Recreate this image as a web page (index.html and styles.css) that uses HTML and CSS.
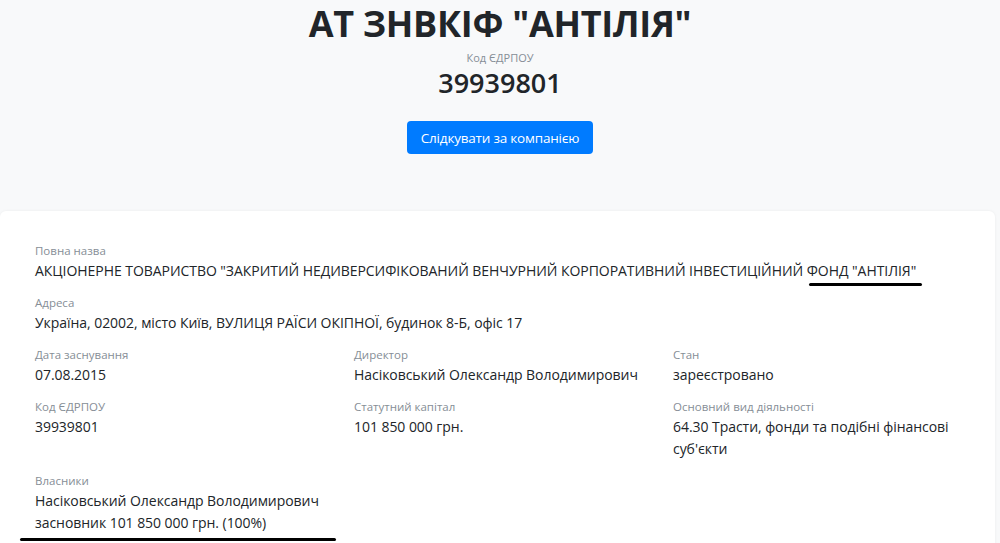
FILE: index.html
```html
<!doctype html>
<html lang="uk">
  <head>
    <meta charset="utf-8">
    <title>АТ ЗНВКІФ "АНТІЛІЯ"</title>
    <link rel="stylesheet" href="styles.css">
  </head>
  <body>
    <div class="hero">
      <h1 class="company-title">АТ ЗНВКІФ "АНТІЛІЯ"</h1>
      <div class="code-label">Код ЄДРПОУ</div>
      <div class="code-value">39939801</div>
      <button class="follow-btn" type="button">Слідкувати за компанією</button>
    </div>

    <div class="card">
      <div class="field">
        <div class="label">Повна назва</div>
        <div class="value">АКЦІОНЕРНЕ ТОВАРИСТВО "ЗАКРИТИЙ НЕДИВЕРСИФІКОВАНИЙ ВЕНЧУРНИЙ КОРПОРАТИВНИЙ ІНВЕСТИЦІЙНИЙ <span class="mark mark-name">ФОНД "АНТІЛІЯ"</span></div>
      </div>
      <div class="field">
        <div class="label">Адреса</div>
        <div class="value">Україна, 02002, місто Київ, ВУЛИЦЯ РАЇСИ ОКІПНОЇ, будинок 8-Б, офіс 17</div>
      </div>

      <div class="grid">
        <div class="field">
          <div class="label">Дата заснування</div>
          <div class="value">07.08.2015</div>
        </div>
        <div class="field">
          <div class="label">Директор</div>
          <div class="value">Насіковський Олександр Володимирович</div>
        </div>
        <div class="field">
          <div class="label">Стан</div>
          <div class="value">зареєстровано</div>
        </div>
        <div class="field">
          <div class="label">Код ЄДРПОУ</div>
          <div class="value">39939801</div>
        </div>
        <div class="field">
          <div class="label">Статутний капітал</div>
          <div class="value">101 850 000 грн.</div>
        </div>
        <div class="field">
          <div class="label">Основний вид діяльності</div>
          <div class="value">64.30 Трасти, фонди та подібні фінансові суб'єкти</div>
        </div>
      </div>

      <div class="field">
        <div class="label">Власники</div>
        <div class="value">Насіковський Олександр Володимирович</div>
        <div class="value"><span class="mark mark-owner">засновник 101 850 000 грн. (100%)</span></div>
      </div>
    </div>
  </body>
</html>
```
FILE: styles.css
```css
body {
  font-family: "Open Sans", "Noto Sans", sans-serif;
  margin: 0;
  background: #f8f9fa;
  color: #212529;
  overflow: hidden;
}

.hero {
  text-align: center;
  padding-bottom: 57px;
}

.company-title {
  font-size: 36px;
  font-weight: 700;
  line-height: 40px;
  margin: 0;
  margin-top: 4px;
  letter-spacing: -0.3px;
}

.code-label {
  font-size: 11px;
  color: #868e96;
  margin-top: 6px;
  line-height: 16px;
}

.code-value {
  font-size: 27px;
  font-weight: 600;
  line-height: 34px;
}

.follow-btn {
  margin-top: 21px;
  background: #007bff;
  color: #fff;
  border: 0;
  border-radius: 4px;
  font-family: "Open Sans", "Noto Sans", sans-serif;
  font-size: 13.5px;
  letter-spacing: -0.2px;
  padding: 0 14px;
  height: 33px;
}

.card {
  background: #fff;
  margin-right: 5px;
  border-radius: 6px 6px 0 0;
  box-shadow: 0 0 3px rgba(0, 0, 0, 0.06);
  padding: 31px 35px 0 35px;
  min-height: 400px;
}

.grid {
  display: grid;
  grid-template-columns: 319px 319px 1fr;
}

.field {
  margin-bottom: 12px;
}

.label {
  font-size: 11.5px;
  color: #868e96;
  line-height: 18px;
}

.value {
  font-size: 14px;
  line-height: 22px;
  letter-spacing: -0.05px;
}

.mark {
  position: relative;
}

.mark::after {
  content: "";
  position: absolute;
  height: 3px;
  border-radius: 2px;
  background: #000;
}

.mark-name::after {
  left: 2px;
  right: -6px;
  bottom: -6px;
}

.mark-owner::after {
  left: -15px;
  right: -70px;
  bottom: -9px;
}
```
